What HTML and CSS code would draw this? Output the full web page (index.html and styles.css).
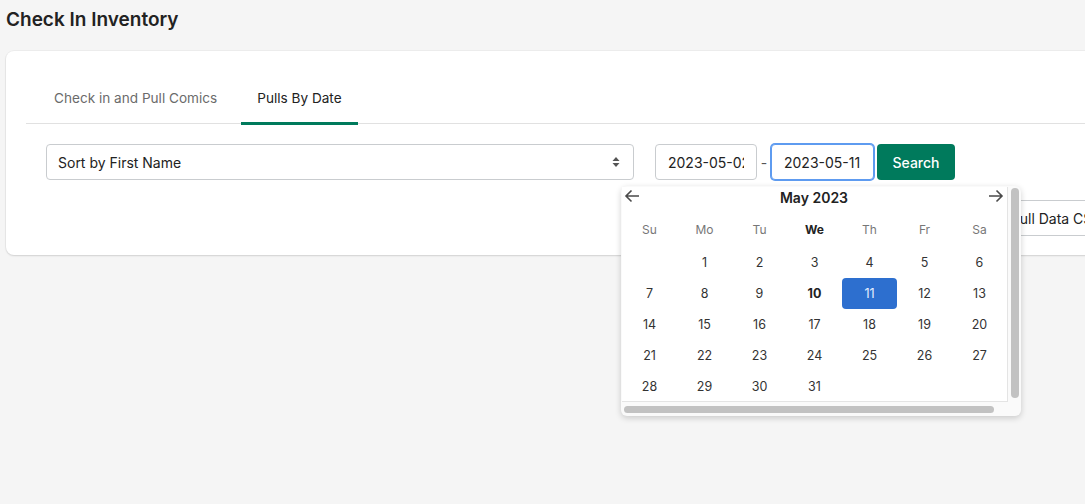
FILE: index.html
```html
<!DOCTYPE html>
<html lang="en">
  <head>
    <meta charset="utf-8">
    <title>Check In Inventory</title>
    <link rel="stylesheet" href="styles.css">
  </head>
  <body>
    <div class="page">
      <h1 class="page-title">Check In Inventory</h1>
      <div class="card">
        <div class="tabs">
          <button class="tab">Check in and Pull Comics</button>
          <button class="tab active">Pulls By Date</button>
        </div>
        <div class="toolbar">
          <div class="select">
            <span>Sort by First Name</span>
            <svg class="select-arrow" width="8" height="12" viewBox="0 0 8 12"><path d="M4 1 L7.5 5 H0.5 Z M4 11 L0.5 7 H7.5 Z"/></svg>
          </div>
          <div class="range">
            <input class="date" type="text" value="2023-05-02">
            <span class="dash">-</span>
            <input class="date focused" type="text" value="2023-05-11">
            <button class="btn-primary">Search</button>

            <div class="datepicker">
              <div class="dp-body">
                <div class="dp-head">
                  <svg class="dp-nav" width="16" height="14" viewBox="0 0 16 14"><path d="M15 7 H2 M7.5 1.5 L2 7 L7.5 12.5"/></svg>
                  <span class="dp-month">May 2023</span>
                  <svg class="dp-nav" width="16" height="14" viewBox="0 0 16 14"><path d="M1 7 H14 M8.5 1.5 L14 7 L8.5 12.5"/></svg>
                </div>
                <div class="dp-grid">
                  <span class="wd">Su</span><span class="wd">Mo</span><span class="wd">Tu</span><span class="wd today">We</span><span class="wd">Th</span><span class="wd">Fr</span><span class="wd">Sa</span>
                  <span></span><span>1</span><span>2</span><span>3</span><span>4</span><span>5</span><span>6</span>
                  <span>7</span><span>8</span><span>9</span><span class="today">10</span><span class="selected">11</span><span>12</span><span>13</span>
                  <span>14</span><span>15</span><span>16</span><span>17</span><span>18</span><span>19</span><span>20</span>
                  <span>21</span><span>22</span><span>23</span><span>24</span><span>25</span><span>26</span><span>27</span>
                  <span>28</span><span>29</span><span>30</span><span>31</span><span></span><span></span><span></span>
                </div>
              </div>
              <div class="dp-vscroll"><div class="thumb"></div></div>
              <div class="dp-hscroll"><div class="thumb"></div></div>
            </div>
          </div>
        </div>
        <div class="actions">
          <button class="btn">Full Data CSV</button>
        </div>
      </div>
    </div>
  </body>
</html>
```

FILE: styles.css
```css
html { background: #f5f5f5; }
body { margin: 0; color: #222; font-family: Inter, "Noto Sans", sans-serif; }
button, input { font-family: inherit; }

/* the card is wider than the window; its right side runs off screen */
.page { width: 1085px; min-height: 504px; box-sizing: border-box; padding: 6px; overflow: hidden; }
.page-title { margin: 0 0 17px; font-size: 19px; line-height: 28px; font-weight: 600; color: #222; }

.card { width: 1129px; box-sizing: border-box; background: #fff; border-radius: 8px; box-shadow: 0 1px 2px rgba(0,0,0,.12), 0 0 0 1px rgba(0,0,0,.03); padding: 27px 20px 19px; }

.tabs { display: flex; gap: 8px; padding-left: 12px; border-bottom: 1px solid #e1e1e1; }
.tab { border: 0; background: none; padding: 10px 16px 14px; font-size: 13.6px; line-height: 20px; color: #6b6b6b; border-bottom: 3px solid transparent; margin-bottom: -2px; cursor: pointer; }
.tab.active { color: #222; border-bottom-color: #007a5c; }

.toolbar { display: flex; align-items: center; gap: 21px; padding: 20px 20px 0; }
.select { width: 588px; height: 36px; box-sizing: border-box; border: 1px solid #c9cccf; border-radius: 4px; display: flex; align-items: center; justify-content: space-between; padding: 0 13px 0 11px; font-size: 14px; color: #222; }
.select-arrow { fill: #555; }

.range { position: relative; display: flex; align-items: center; }
.date { width: 102px; height: 36px; box-sizing: border-box; border: 1px solid #c9cccf; border-radius: 4px; padding: 0 12px; font-size: 14px; color: #222; outline: none; }
.date.focused { width: 103px; border-color: #5e9bf0; box-shadow: 0 0 0 1px #5e9bf0; }
.dash { width: 14px; text-align: center; font-size: 14px; color: #555; }
.btn-primary { margin-left: 3px; height: 36px; width: 78px; border: 0; border-radius: 4px; background: #007a5c; color: #fff; font-size: 14px; font-weight: 500; }

.actions { display: flex; justify-content: flex-end; padding-top: 20px; }
.btn { height: 36px; padding: 0 12px; background: #fff; border: 1px solid #c9cccf; border-radius: 4px; font-size: 14px; color: #222; }

/* popup calendar under the end date */
.datepicker { position: absolute; left: -34px; top: 42px; z-index: 10; display: grid; grid-template-columns: 386px 13px; grid-template-rows: 215px 14px; padding: 1px 0 0 1px; background: #fafafa; border-radius: 6px; box-shadow: 0 2px 6px rgba(0,0,0,.18); }
.dp-body { background: #fff; border-right: 1px solid #e4e4e4; border-bottom: 1px solid #e4e4e4; overflow: hidden; }
.dp-head { display: flex; align-items: center; justify-content: space-between; height: 22px; padding: 0 3px 0 2px; }
.dp-nav { fill: none; stroke: #4a4a4a; stroke-width: 1.6; margin-top: -4px; }
.dp-month { font-size: 14px; font-weight: 600; color: #222; margin-top: -2px; }
.dp-grid { display: grid; grid-template-columns: repeat(7, 55px); grid-template-rows: 38px repeat(5, 31px); }
.dp-grid span { display: flex; align-items: center; justify-content: center; font-size: 12.5px; color: #333; border-radius: 4px; }
.dp-grid .wd { color: #777; font-size: 12px; padding-top: 2px; }
.dp-grid .today { font-weight: 700; color: #222; }
.dp-grid .selected { background: #2d6fcf; color: #e8f0ff; }

.dp-vscroll { grid-row: 1 / 3; grid-column: 2; padding: 1px 2px 0 3px; }
.dp-vscroll .thumb { width: 8px; height: 210px; background: #c2c2c2; border-radius: 4px; }
.dp-hscroll { grid-row: 2; grid-column: 1; padding: 4px 0 0 2px; }
.dp-hscroll .thumb { width: 370px; height: 7px; background: #c2c2c2; border-radius: 4px; }
```
